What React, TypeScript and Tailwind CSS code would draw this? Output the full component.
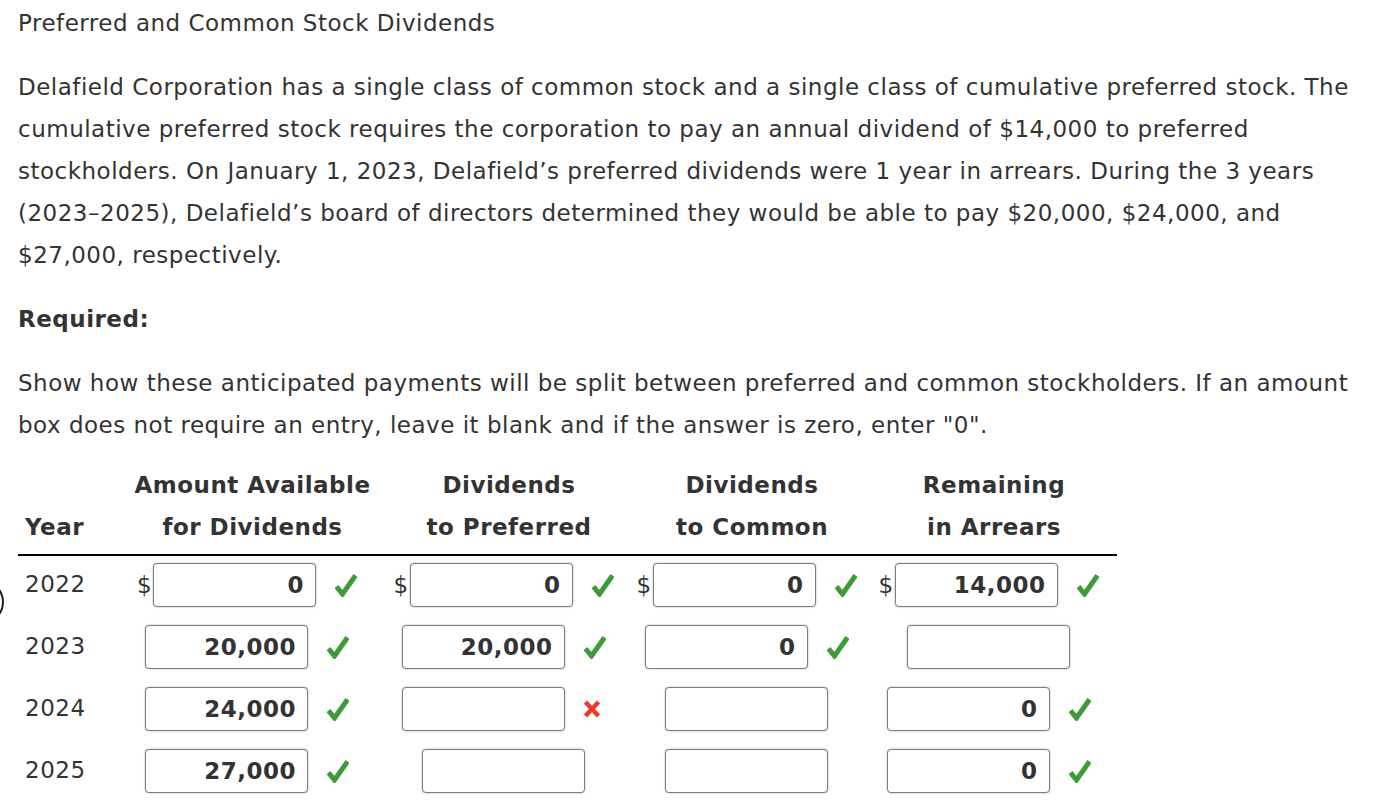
import React from "react";

type Mark = "check" | "cross" | null;

type Cell = {
  value: string;
  mark: Mark;
  dollar?: boolean;
};

const rows: { year: string; cells: Cell[] }[] = [
  {
    year: "2022",
    cells: [
      { value: "0", mark: "check", dollar: true },
      { value: "0", mark: "check", dollar: true },
      { value: "0", mark: "check", dollar: true },
      { value: "14,000", mark: "check", dollar: true },
    ],
  },
  {
    year: "2023",
    cells: [
      { value: "20,000", mark: "check" },
      { value: "20,000", mark: "check" },
      { value: "0", mark: "check" },
      { value: "", mark: null },
    ],
  },
  {
    year: "2024",
    cells: [
      { value: "24,000", mark: "check" },
      { value: "", mark: "cross" },
      { value: "", mark: null },
      { value: "0", mark: "check" },
    ],
  },
  {
    year: "2025",
    cells: [
      { value: "27,000", mark: "check" },
      { value: "", mark: null },
      { value: "", mark: null },
      { value: "0", mark: "check" },
    ],
  },
];

const headers = [
  ["Amount Available", "for Dividends"],
  ["Dividends", "to Preferred"],
  ["Dividends", "to Common"],
  ["Remaining", "in Arrears"],
];

const CheckIcon = () => (
  <svg width="22" height="23" viewBox="0 0 22 23" className="shrink-0">
    <path d="M1.5 12.5 L7.5 20 L20.5 1.5" fill="none" stroke="#3f9a3a" strokeWidth="5" strokeLinejoin="miter" />
  </svg>
);

const CrossIcon = () => (
  <svg width="22" height="22" viewBox="0 0 22 22" className="shrink-0">
    <path d="M1.5 4 L14.5 18 M14.5 4 L1.5 18" fill="none" stroke="#ec3a2e" strokeWidth="4.5" />
  </svg>
);

const AmountCell = ({ cell }: { cell: Cell }) => (
  <div className="flex items-center justify-center pr-[11px]">
    {cell.dollar && <span className="w-4 text-left">$</span>}
    <input
      readOnly
      defaultValue={cell.value}
      className="h-[44px] w-[163px] rounded-[4px] border border-[#7d7d7d] bg-white pr-[11px] text-right font-bold tracking-[0.5px] text-[#333] shadow-[0_0_2px_rgba(0,0,0,0.35)] outline-none"
    />
    {cell.mark && (
      <span className="ml-[19px] flex">
        {cell.mark === "check" ? <CheckIcon /> : <CrossIcon />}
      </span>
    )}
  </div>
);

export default function App() {
  return (
    <div className="relative min-h-[800px] bg-white pl-[18px] text-[23px] leading-[42px] tracking-[0.5px] text-[#333] [font-family:'DejaVu_Sans',Verdana,sans-serif]">
      <h1 className="pt-[2px]">Preferred and Common Stock Dividends</h1>

      <p className="mt-[22px] whitespace-nowrap">
        Delafield Corporation has a single class of common stock and a single class of cumulative preferred stock. The
        <br />
        cumulative preferred stock requires the corporation to pay an annual dividend of $14,000 to preferred
        <br />
        stockholders. On January 1, 2023, Delafield’s preferred dividends were 1 year in arrears. During the 3 years
        <br />
        (2023–2025), Delafield’s board of directors determined they would be able to pay $20,000, $24,000, and
        <br />
        $27,000, respectively.
      </p>

      <p className="mt-[22px] font-bold">Required:</p>

      <p className="mt-[22px] whitespace-nowrap">
        Show how these anticipated payments will be split between preferred and common stockholders. If an amount
        <br />
        box does not require an entry, leave it blank and if the answer is zero, enter "0".
      </p>

      <div className="mt-[18px] w-[1099px]">
        <div className="grid grid-cols-[102px_265px_248px_238px_246px] border-b-2 border-black pb-[6px] font-bold">
          <div className="flex items-end pl-[7px]">Year</div>
          {headers.map((h, i) => (
            <div key={i} className="text-center">
              <div>{h[0]}</div>
              <div>{h[1]}</div>
            </div>
          ))}
        </div>

        <div className="pt-[7px]">
          {rows.map((row) => (
            <div key={row.year} className="grid h-[62px] grid-cols-[102px_265px_248px_238px_246px] items-start">
              <div className="flex h-[44px] items-center pl-[7px] pb-[3px]">{row.year}</div>
              {row.cells.map((cell, i) => (
                <AmountCell key={i} cell={cell} />
              ))}
            </div>
          ))}
        </div>
      </div>

      {/* clipped circle at the left edge */}
      <div className="absolute left-[-40px] top-[580px] h-[44px] w-[44px] rounded-full border-2 border-[#222]" />
    </div>
  );
}
